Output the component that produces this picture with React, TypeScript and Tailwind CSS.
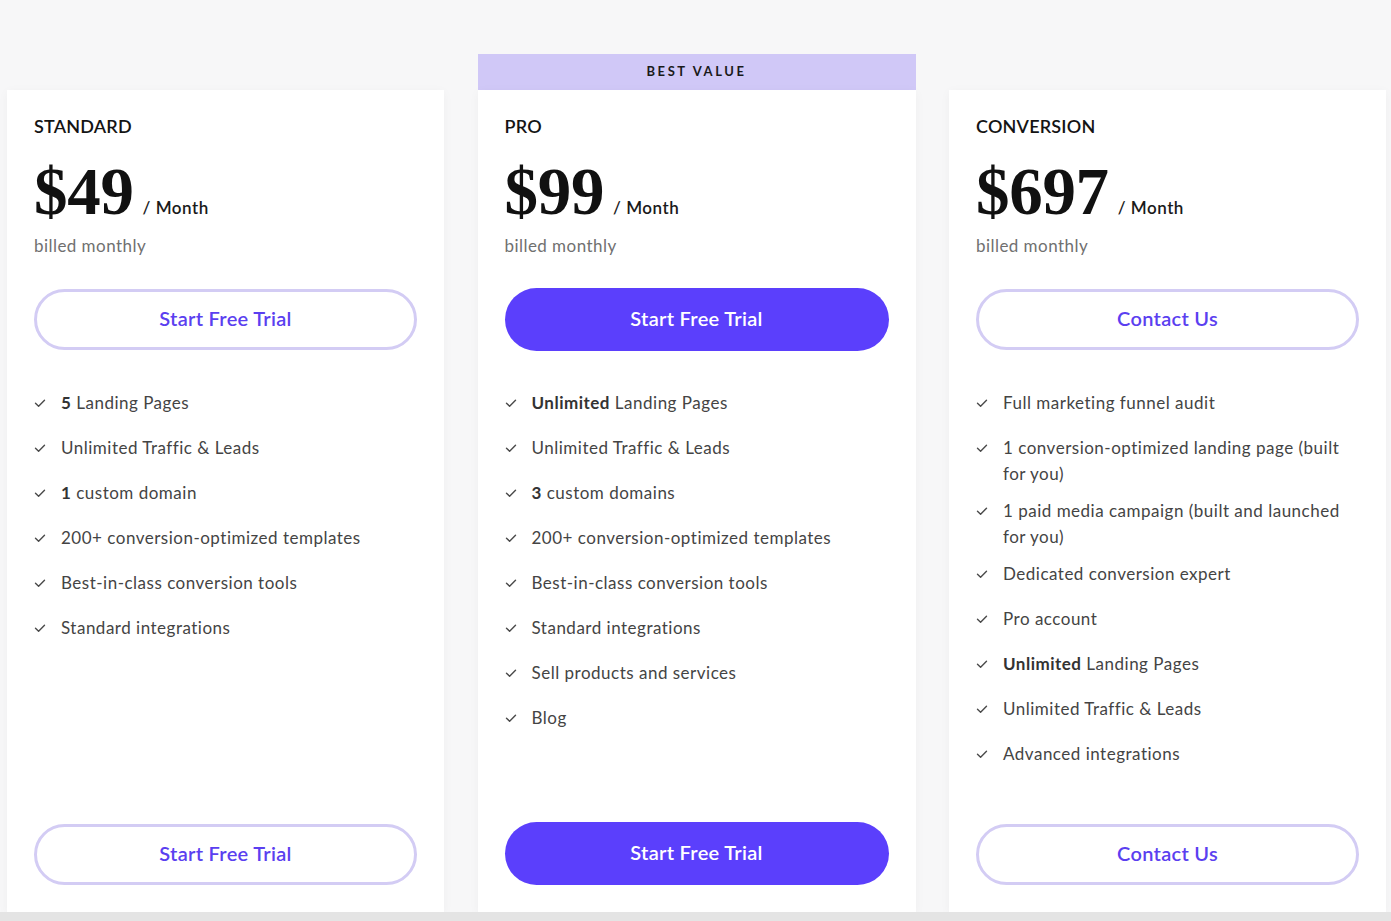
import React from 'react'

type Feature = { bold?: string; text: string }

type Plan = {
  name: string
  price: string
  cta: string
  featured?: boolean
  features: Feature[]
}

const plans: Plan[] = [
  {
    name: 'STANDARD',
    price: '$49',
    cta: 'Start Free Trial',
    features: [
      { bold: '5', text: ' Landing Pages' },
      { text: 'Unlimited Traffic & Leads' },
      { bold: '1', text: ' custom domain' },
      { text: '200+ conversion-optimized templates' },
      { text: 'Best-in-class conversion tools' },
      { text: 'Standard integrations' },
    ],
  },
  {
    name: 'PRO',
    price: '$99',
    cta: 'Start Free Trial',
    featured: true,
    features: [
      { bold: 'Unlimited', text: ' Landing Pages' },
      { text: 'Unlimited Traffic & Leads' },
      { bold: '3', text: ' custom domains' },
      { text: '200+ conversion-optimized templates' },
      { text: 'Best-in-class conversion tools' },
      { text: 'Standard integrations' },
      { text: 'Sell products and services' },
      { text: 'Blog' },
    ],
  },
  {
    name: 'CONVERSION',
    price: '$697',
    cta: 'Contact Us',
    features: [
      { text: 'Full marketing funnel audit' },
      { text: '1 conversion-optimized landing page (built for you)' },
      { text: '1 paid media campaign (built and launched for you)' },
      { text: 'Dedicated conversion expert' },
      { text: 'Pro account' },
      { bold: 'Unlimited', text: ' Landing Pages' },
      { text: 'Unlimited Traffic & Leads' },
      { text: 'Advanced integrations' },
    ],
  },
]

const Check = () => (
  <svg width="12" height="26" viewBox="0 0 12 26" fill="none" className="shrink-0">
    <path d="M1.5 13.2 L4.6 16.2 L10.5 10.2" stroke="#4a4a4a" strokeWidth="1.4" strokeLinecap="round" strokeLinejoin="round" />
  </svg>
)

const CtaButton = ({ label, featured }: { label: string; featured?: boolean }) =>
  featured ? (
    <button className="h-[63px] w-full rounded-full bg-[#5b3ffc] pb-[4px] text-[20px] font-semibold tracking-[0.3px] text-white">
      {label}
    </button>
  ) : (
    <button className="h-[61px] w-full rounded-full border-[3px] border-[#d3ccf4] bg-white pb-[4px] text-[20px] font-semibold tracking-[0.3px] text-[#5b3ff0]">
      {label}
    </button>
  )

const PlanCard = ({ plan }: { plan: Plan }) => (
  <div className="flex flex-col">
    <div className="flex h-[36px] items-center justify-center">
      {plan.featured && (
        <div className="flex h-full w-full items-center justify-center bg-[#d0c8f7] text-[13px] font-bold tracking-[2.6px] text-[#1a1a1a]">
          BEST VALUE
        </div>
      )}
    </div>
    <div className="flex h-[822px] flex-col bg-white px-[27px] pb-[27px] pt-[24px] shadow-[0_2px_10px_rgba(0,0,0,0.04)]">
      <div className="text-[18px] font-semibold leading-[24px] tracking-[0.2px] text-[#141414]">{plan.name}</div>
      <div className="mt-[20px] flex items-baseline">
        <span className="font-['Liberation_Serif',serif] text-[67px] font-bold leading-[67px] tracking-[-0.3px] text-[#111]">
          {plan.price}
        </span>
        <span className="ml-[9px] text-[17px] font-semibold tracking-[0.5px] text-[#1a1a1a]">/ Month</span>
      </div>
      <div className="mt-[9px] text-[17px] leading-[24px] tracking-[0.45px] text-[#707070]">billed monthly</div>
      <div className={plan.featured ? 'mt-[30px]' : 'mt-[31px]'}>
        <CtaButton label={plan.cta} featured={plan.featured} />
      </div>
      <ul className={plan.featured ? 'mt-[39px]' : 'mt-[40px]'}>
        {plan.features.map((f, i) => (
          <li key={i} className="mb-[11px] flex min-h-[34px] gap-[15px] text-[17px] leading-[26px] tracking-[0.5px] text-[#444]">
            <Check />
            <span>
              {f.bold && <b className="font-bold text-[#333]">{f.bold}</b>}
              {f.text}
            </span>
          </li>
        ))}
      </ul>
      <div className="mt-auto">
        <CtaButton label={plan.cta} featured={plan.featured} />
      </div>
    </div>
  </div>
)

export default function App() {
  return (
    <div className="flex h-[921px] w-full flex-col overflow-hidden bg-[#f7f7f8] font-['Lato',sans-serif]">
      <div className="grid grid-cols-[437px_438px_437px] gap-x-[33.5px] pl-[7px] pt-[54px]">
        {plans.map((p) => (
          <PlanCard key={p.name} plan={p} />
        ))}
      </div>
      <div className="flex-1 bg-[#e4e4e4]" />
    </div>
  )
}
